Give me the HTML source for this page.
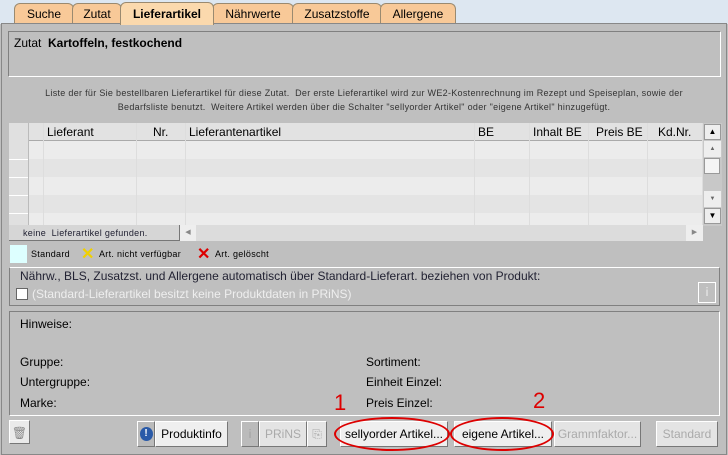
<!DOCTYPE html>
<html><head><meta charset="utf-8"><style>
*{box-sizing:border-box;margin:0;padding:0}
body{width:728px;height:455px;overflow:hidden;background:#bfbfbf;font-family:"Liberation Sans",sans-serif;font-size:12px;color:#000;position:relative}
.a{position:absolute}
.tabbar{left:0;top:0;width:728px;height:24px;background:#dde7f1}
.tab{top:3px;height:21px;background:#f8c998;border:1px solid #9a8a70;border-bottom:none;border-radius:6px 6px 0 0;text-align:center;line-height:20px;font-size:12px}
.panel{left:1px;top:23px;width:726px;height:432px;border:1px solid #888;background:#bfbfbf}
.sunk{border:1px solid #fff;border-top-color:#808080;border-left-color:#808080}
.small{font-size:9px;color:#333;letter-spacing:0.3px}
.cell{position:absolute;border-right:1px solid #ddd}
.btn{position:absolute;top:421px;height:26px;background:#efefef;border:1px solid #fff;border-right-color:#777;border-bottom-color:#777;font-size:12px;text-align:center;line-height:24px}
.dis{color:#aaa;background:#e4e4e4}
.ell{position:absolute;border:2px solid #d00;border-radius:50%}
</style></head><body>
<div class="a tabbar"></div>
<div class="a tab" style="left:14px;width:60px">Suche</div>
<div class="a tab" style="left:72px;width:50px">Zutat</div>
<div class="a tab" style="left:212px;width:82px">Nährwerte</div>
<div class="a tab" style="left:292px;width:90px">Zusatzstoffe</div>
<div class="a tab" style="left:380px;width:76px">Allergene</div>
<div class="a panel"></div>
<div class="a tab" style="left:120px;width:94px;top:2px;height:23px;background:#fbd9ad;font-weight:bold;line-height:22px;border-bottom:none">Lieferartikel</div>

<div class="a sunk" style="left:8px;top:31px;width:713px;height:46px;padding:4px 0 0 5px">Zutat&nbsp; <b>Kartoffeln, festkochend</b></div>
<div class="a small" style="left:0;top:86px;width:728px;text-align:center;line-height:14px">Liste der für Sie bestellbaren Lieferartikel für diese Zutat.&nbsp; Der erste Lieferartikel wird zur WE2-Kostenrechnung im Rezept und Speiseplan, sowie der<br>Bedarfsliste benutzt.&nbsp; Weitere Artikel werden über die Schalter "sellyorder Artikel" oder "eigene Artikel" hinzugefügt.</div>

<div class="a" style="left:9px;top:123px;width:694px;height:103px;background:#ececec">
 <div class="a" style="left:0;top:0;width:694px;height:18px;background:#e2e2e2;border-bottom:1px solid #aaa"></div>
 <div class="a" style="left:0;top:36px;width:694px;height:18px;background:#e4e4e4"></div>
 <div class="a" style="left:0;top:72px;width:694px;height:18px;background:#e4e4e4"></div>
 <div class="a" style="left:0;top:0;width:20px;height:103px;background:#e0e0e0"></div>
 <div class="a" style="left:0;top:36px;width:20px;height:1px;background:#fff"></div>
 <div class="a" style="left:0;top:54px;width:20px;height:1px;background:#fff"></div>
 <div class="a" style="left:0;top:72px;width:20px;height:1px;background:#fff"></div>
 <div class="a" style="left:0;top:90px;width:20px;height:1px;background:#fff"></div>
 <div class="cell" style="left:0;top:0;width:20px;height:103px;border-right:1px solid #bbb"></div>
 <div class="cell" style="left:20px;top:0;width:15px;height:103px"></div>
 <div class="cell" style="left:35px;top:0;width:93px;height:103px;padding:2px 3px">Lieferant</div>
 <div class="cell" style="left:128px;top:0;width:49px;height:103px;padding:2px 0 0 16px">Nr.</div>
 <div class="cell" style="left:177px;top:0;width:289px;height:103px;padding:2px 3px">Lieferantenartikel</div>
 <div class="cell" style="left:466px;top:0;width:55px;height:103px;padding:2px 3px">BE</div>
 <div class="cell" style="left:521px;top:0;width:59px;height:103px;padding:2px 3px">Inhalt BE</div>
 <div class="cell" style="left:580px;top:0;width:59px;height:103px;padding:2px 0 0 7px">Preis BE</div>
 <div class="cell" style="left:639px;top:0;width:55px;height:103px;padding:2px 0 0 10px">Kd.Nr.</div>
</div>
<div class="a" style="left:703px;top:123px;width:19px;height:103px;background:#c8c8c8">
 <div class="a" style="left:1px;top:1px;width:17px;height:16px;background:#eee;border:1px solid #999;font-size:8px;text-align:center;line-height:14px">▲</div>
 <div class="a" style="left:1px;top:18px;width:17px;height:16px;background:#eee;font-size:6px;text-align:center;line-height:16px;color:#666">▲</div>
 <div class="a" style="left:1px;top:35px;width:16px;height:16px;background:#f4f4f4;border:1px solid #999"></div>
 <div class="a" style="left:1px;top:68px;width:17px;height:16px;background:#eee;font-size:6px;text-align:center;line-height:16px;color:#666">▼</div>
 <div class="a" style="left:1px;top:85px;width:17px;height:16px;background:#eee;border:1px solid #999;font-size:8px;text-align:center;line-height:14px">▼</div>
</div>
<div class="a small" style="left:9px;top:225px;width:171px;height:16px;background:#d6d6d6;border-right:1px solid #777;border-bottom:1px solid #777;color:#223;padding:3px 0 0 14px">keine&nbsp; Lieferartikel gefunden.</div>
<div class="a" style="left:180px;top:225px;width:523px;height:16px;background:#dcdcdc"></div>
<div class="a" style="left:180px;top:225px;width:16px;height:16px;background:#eee;font-size:7px;color:#888;line-height:16px;text-align:center">◀</div>
<div class="a" style="left:686px;top:225px;width:17px;height:16px;background:#eee;font-size:7px;color:#888;line-height:16px;text-align:center">▶</div>

<div class="a" style="left:10px;top:245px;width:17px;height:18px;background:#dff;"></div>
<div class="a small" style="left:31px;top:249px;color:#000">Standard</div>
<div class="a" style="left:81px;top:244px;font-size:16px;color:#f0d000;font-weight:bold">✕</div>
<div class="a small" style="left:99px;top:249px;color:#000">Art. nicht verfügbar</div>
<div class="a" style="left:197px;top:244px;font-size:16px;color:#d00;font-weight:bold">✕</div>
<div class="a small" style="left:215px;top:249px;color:#000">Art. gelöscht</div>

<div class="a sunk" style="left:9px;top:267px;width:711px;height:39px;border-color:#fff #808080 #808080 #808080"></div>
<div class="a" style="left:20px;top:269px;color:#223;background:#bfbfbf;padding-right:4px">Nährw., BLS, Zusatzst. und Allergene automatisch über Standard-Lieferart. beziehen von Produkt:</div>
<div class="a" style="left:16px;top:288px;width:12px;height:12px;background:#fff;border:1px solid #666"></div>
<div class="a" style="left:32px;top:287px;color:#eee">(Standard-Lieferartikel besitzt keine Produktdaten in PRiNS)</div>
<div class="a" style="left:698px;top:282px;width:18px;height:21px;border:1px solid #fff;color:#ddd;text-align:center;font-weight:bold;line-height:19px">i</div>

<div class="a sunk" style="left:9px;top:311px;width:711px;height:105px;border-color:#808080 #fff #fff #808080"></div>
<div class="a" style="left:20px;top:317px">Hinweise:</div>
<div class="a" style="left:20px;top:355px">Gruppe:</div>
<div class="a" style="left:20px;top:375px">Untergruppe:</div>
<div class="a" style="left:20px;top:396px">Marke:</div>
<div class="a" style="left:366px;top:355px">Sortiment:</div>
<div class="a" style="left:366px;top:375px">Einheit Einzel:</div>
<div class="a" style="left:366px;top:396px">Preis Einzel:</div>
<div class="a" style="left:334px;top:390px;font-size:22px;color:#d00">1</div>
<div class="a" style="left:533px;top:388px;font-size:22px;color:#d00">2</div>

<div class="btn" style="left:9px;top:420px;width:21px;height:24px;background:#eaeaea;color:#888">🗑</div>
<div class="btn" style="left:137px;width:18px;background:#bbb;padding-top:5px"><div style="width:13px;height:14px;border-radius:50%;background:#2a5aa8;color:#fff;font-size:10px;font-weight:bold;line-height:14px;margin:auto">!</div></div>
<div class="btn" style="left:155px;width:73px">Produktinfo</div>
<div class="btn dis" style="left:241px;width:18px;background:#bbb;font-weight:bold">i</div>
<div class="btn dis" style="left:259px;width:48px">PRiNS</div>
<div class="btn dis" style="left:307px;width:20px">⎘</div>
<div class="btn" style="left:340px;width:108px">sellyorder Artikel...</div>
<div class="btn" style="left:454px;width:98px">eigene Artikel...</div>
<div class="btn dis" style="left:554px;width:87px">Grammfaktor...</div>
<div class="btn dis" style="left:656px;width:62px">Standard</div>
<div class="ell" style="left:334px;top:417px;width:116px;height:34px"></div>
<div class="ell" style="left:450px;top:417px;width:104px;height:34px"></div>
</body></html>
